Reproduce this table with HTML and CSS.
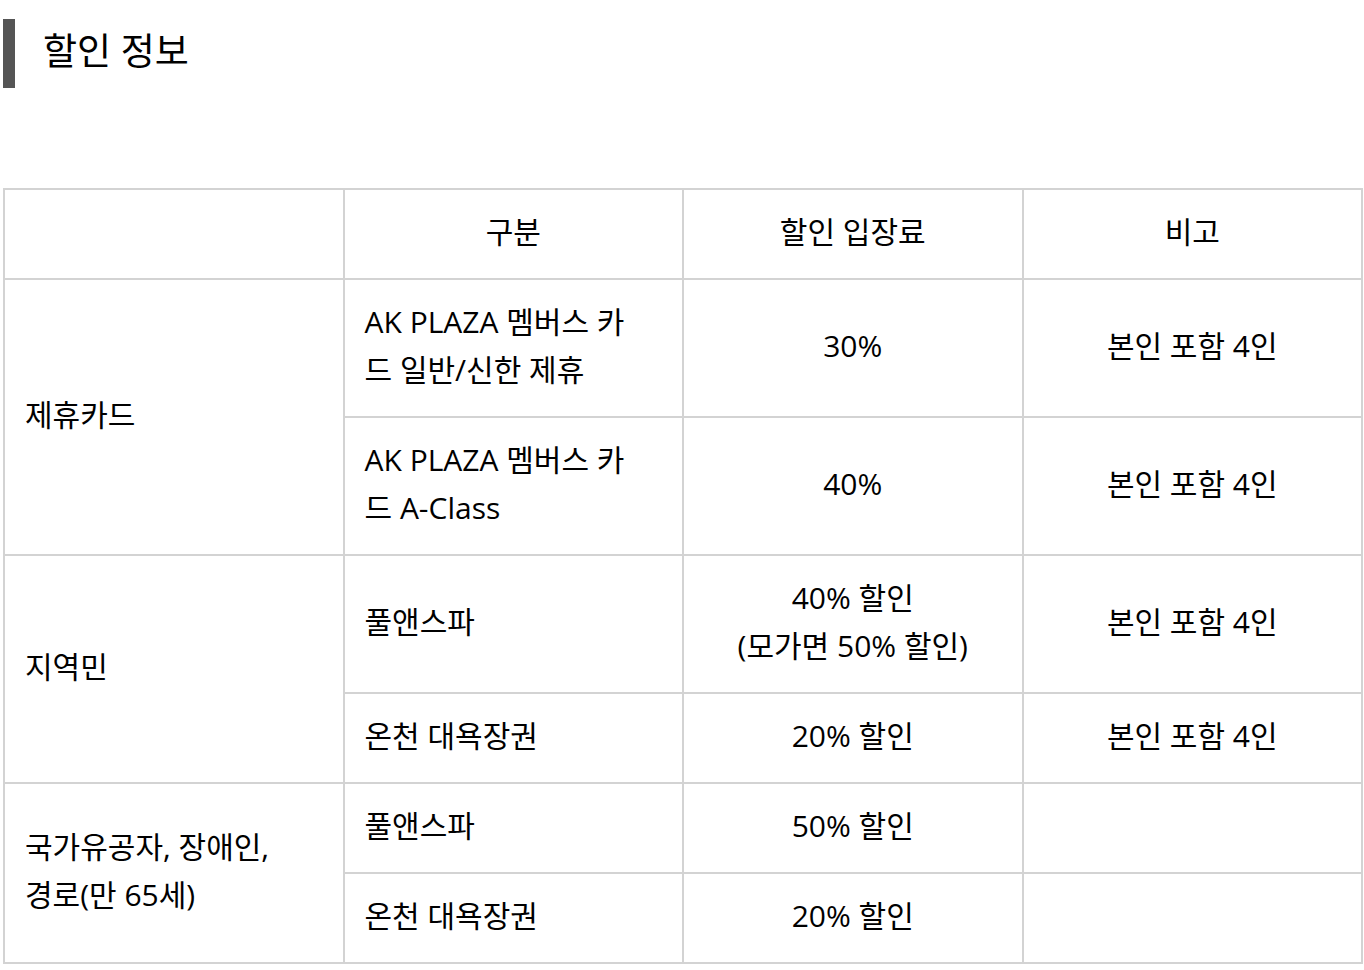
FILE: index.html
```html
<!DOCTYPE html>
<html lang="ko">
<head>
<meta charset="utf-8">
<title>할인 정보</title>
<link rel="stylesheet" href="styles.css">
</head>
<body>
<div class="page">
  <h2 class="section-title">할인 정보</h2>
  <table class="discount-table">
    <colgroup>
      <col class="c1"><col class="c2"><col class="c3"><col class="c4">
    </colgroup>
    <thead>
      <tr>
        <th></th>
        <th>구분</th>
        <th>할인 입장료</th>
        <th>비고</th>
      </tr>
    </thead>
    <tbody>
      <tr>
        <td class="cat" rowspan="2">제휴카드</td>
        <td class="name">AK PLAZA 멤버스 카드 일반/신한 제휴</td>
        <td class="mid">30%</td>
        <td class="mid">본인 포함 4인</td>
      </tr>
      <tr>
        <td class="name">AK PLAZA 멤버스 카드 A-Class</td>
        <td class="mid">40%</td>
        <td class="mid">본인 포함 4인</td>
      </tr>
      <tr>
        <td class="cat" rowspan="2">지역민</td>
        <td class="name">풀앤스파</td>
        <td class="mid">40% 할인<br>(모가면 50% 할인)</td>
        <td class="mid">본인 포함 4인</td>
      </tr>
      <tr>
        <td class="name">온천 대욕장권</td>
        <td class="mid">20% 할인</td>
        <td class="mid">본인 포함 4인</td>
      </tr>
      <tr>
        <td class="cat" rowspan="2">국가유공자, 장애인,<br>경로(만 65세)</td>
        <td class="name">풀앤스파</td>
        <td class="mid">50% 할인</td>
        <td class="mid"></td>
      </tr>
      <tr>
        <td class="name">온천 대욕장권</td>
        <td class="mid">20% 할인</td>
        <td class="mid"></td>
      </tr>
    </tbody>
  </table>
</div>
</body>
</html>
```

FILE: styles.css
```css
html, body {
  margin: 0;
  padding: 0;
  background: #fff;
}

body {
  font-family: "Open Sans", "Noto Sans CJK KR", sans-serif;
  color: #000;
}

.page {
  padding: 19px 0 0 3px;
}

.section-title {
  margin: 0;
  height: 69px;
  border-left: 12px solid #555;
  padding-left: 28px;
  font-size: 37px;
  font-weight: 400;
  line-height: 64px;
  box-sizing: border-box;
}

.discount-table {
  margin-top: 100px;
  width: 1360px;
  border-collapse: collapse;
  table-layout: fixed;
  font-size: 30px;
  line-height: 48px;
}

.discount-table col {
  width: 25%;
}

.discount-table th,
.discount-table td {
  border: 2px solid #d3d3d3;
  padding: 18px 20px 22px;
  vertical-align: middle;
}

.discount-table th {
  font-weight: 400;
  text-align: center;
}

.discount-table .cat {
  text-align: left;
}

.discount-table .name {
  text-align: left;
  padding-right: 40px;
}

.discount-table .mid {
  text-align: center;
}
```
